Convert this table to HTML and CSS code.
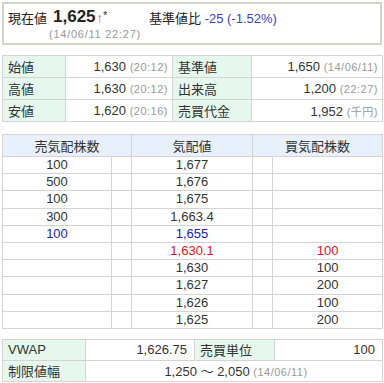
FILE: index.html
```html
<!DOCTYPE html>
<html lang="ja">
<head>
<meta charset="utf-8">
<link rel="stylesheet" href="styles.css">
</head>
<body>
<div class="page">
  <div class="quote">
    <div class="now-label">現在値</div>
    <div class="price-line"><span class="price">1,625</span><span class="arrow">↑</span><span class="star">*</span></div>
    <div class="diff"><span class="diff-label">基準値比</span> <span class="diff-val">-25 (-1.52%)</span></div>
    <div class="time">(14/06/11 22:27)</div>
  </div>

  <table class="info">
    <colgroup><col class="c1"><col class="c2"><col class="c3"><col class="c4"></colgroup>
    <tr><th>始値</th><td>1,630 <small>(20:12)</small></td><th>基準値</th><td>1,650 <small>(14/06/11)</small></td></tr>
    <tr><th>高値</th><td>1,630 <small>(20:12)</small></td><th>出来高</th><td>1,200 <small>(22:27)</small></td></tr>
    <tr><th>安値</th><td>1,620 <small>(20:16)</small></td><th>売買代金</th><td>1,952 <small>(千円)</small></td></tr>
  </table>

  <table class="book">
    <colgroup><col class="b1"><col class="b2"><col class="b3"><col class="b4"><col class="b5"></colgroup>
    <tr class="head"><th colspan="2">売気配株数</th><th>気配値</th><th colspan="2">買気配株数</th></tr>
    <tr><td>100</td><td></td><td>1,677</td><td></td><td></td></tr>
    <tr><td>500</td><td></td><td>1,676</td><td></td><td></td></tr>
    <tr><td>100</td><td></td><td>1,675</td><td></td><td></td></tr>
    <tr><td>300</td><td></td><td>1,663.4</td><td></td><td></td></tr>
    <tr class="blue"><td>100</td><td></td><td>1,655</td><td></td><td></td></tr>
    <tr class="red"><td></td><td></td><td>1,630.1</td><td></td><td>100</td></tr>
    <tr><td></td><td></td><td>1,630</td><td></td><td>100</td></tr>
    <tr><td></td><td></td><td>1,627</td><td></td><td>200</td></tr>
    <tr><td></td><td></td><td>1,626</td><td></td><td>100</td></tr>
    <tr><td></td><td></td><td>1,625</td><td></td><td>200</td></tr>
  </table>

  <table class="info extra">
    <colgroup><col class="e1"><col class="e2"><col class="e3"><col class="e4"></colgroup>
    <tr><th>VWAP</th><td>1,626.75</td><th>売買単位</th><td>100</td></tr>
    <tr><th>制限値幅</th><td colspan="3" class="range">1,250 〜 2,050 <small>(14/06/11)</small></td></tr>
  </table>
</div>
</body>
</html>
```
FILE: styles.css
```css
html, body {
  margin: 0;
  padding: 0;
  background: #fff;
}
body {
  font-family: "Liberation Sans", Arial, "Noto Sans CJK JP", sans-serif;
  font-size: 13px;
  color: #333;
}
.page {
  width: 380px;
  padding: 2px;
}
.quote {
  height: 39px;
  border: 2px solid #d3d3cc;
  display: grid;
  grid-template-columns: 45px 96px auto;
  grid-template-rows: 24px 12px;
  padding: 0 4px;
  align-items: end;
}
.now-label {
  grid-column: 1;
  grid-row: 1;
  font-size: 13px;
  color: #222;
  line-height: 18px;
}
.price-line {
  grid-column: 2;
  grid-row: 1;
  line-height: 20px;
  white-space: nowrap;
}
.price {
  font-weight: bold;
  font-size: 17px;
  color: #222;
}
.arrow {
  color: #e0303a;
  font-size: 13px;
  margin-left: 1px;
}
.star {
  font-size: 11px;
  color: #333;
  vertical-align: 3px;
}
.time {
  grid-column: 2 / 4;
  grid-row: 2;
  justify-self: start;
  color: #999;
  font-size: 11px;
  letter-spacing: 0.75px;
  line-height: 12px;
  margin-left: -4px;
  white-space: nowrap;
}
.diff {
  grid-column: 3;
  grid-row: 1;
  line-height: 18px;
  color: #222;
  white-space: nowrap;
}
.diff-val {
  color: #4040c0;
}
table {
  border-collapse: collapse;
  table-layout: fixed;
  width: 380px;
}
td, th {
  border: 1px solid #d4d4d4;
  padding: 0 4px;
  font-weight: normal;
  white-space: nowrap;
}
.info {
  margin-top: 10px;
}
.info th {
  background: #e6f7ee;
  text-align: left;
  color: #333;
  padding-left: 5px;
}
.info td {
  text-align: right;
  color: #333;
}
.info tr {
  height: 22px;
}
small {
  font-size: 11px;
  color: #999;
  letter-spacing: 0.5px;
}
.c1 { width: 63px; }
.c2 { width: 107px; }
.c3 { width: 79px; }
.c4 { width: 131px; }
.book {
  margin-top: 12px;
}
.book .head {
  height: 22px;
}
.book .head th {
  background: #e8f0fb;
  color: #333;
  font-size: 13px;
}
.book tr {
  height: 17.2px;
}
.book td {
  text-align: center;
  line-height: 16px;
  padding: 0;
}
.book .blue td { color: #2020b8; }
.book .red td { color: #e0102a; }
.b1 { width: 109px; }
.b2 { width: 20px; }
.b3 { width: 121px; }
.b4 { width: 20px; }
.b5 { width: 110px; }
.extra {
  margin-top: 10px;
}
.extra tr {
  height: 21px;
}
.e1 { width: 83px; }
.e2 { width: 109px; }
.e3 { width: 80px; }
.e4 { width: 108px; }
.extra td {
  padding-right: 7px;
}
.extra td.range {
  text-align: center;
  padding-right: 0;
}
```
